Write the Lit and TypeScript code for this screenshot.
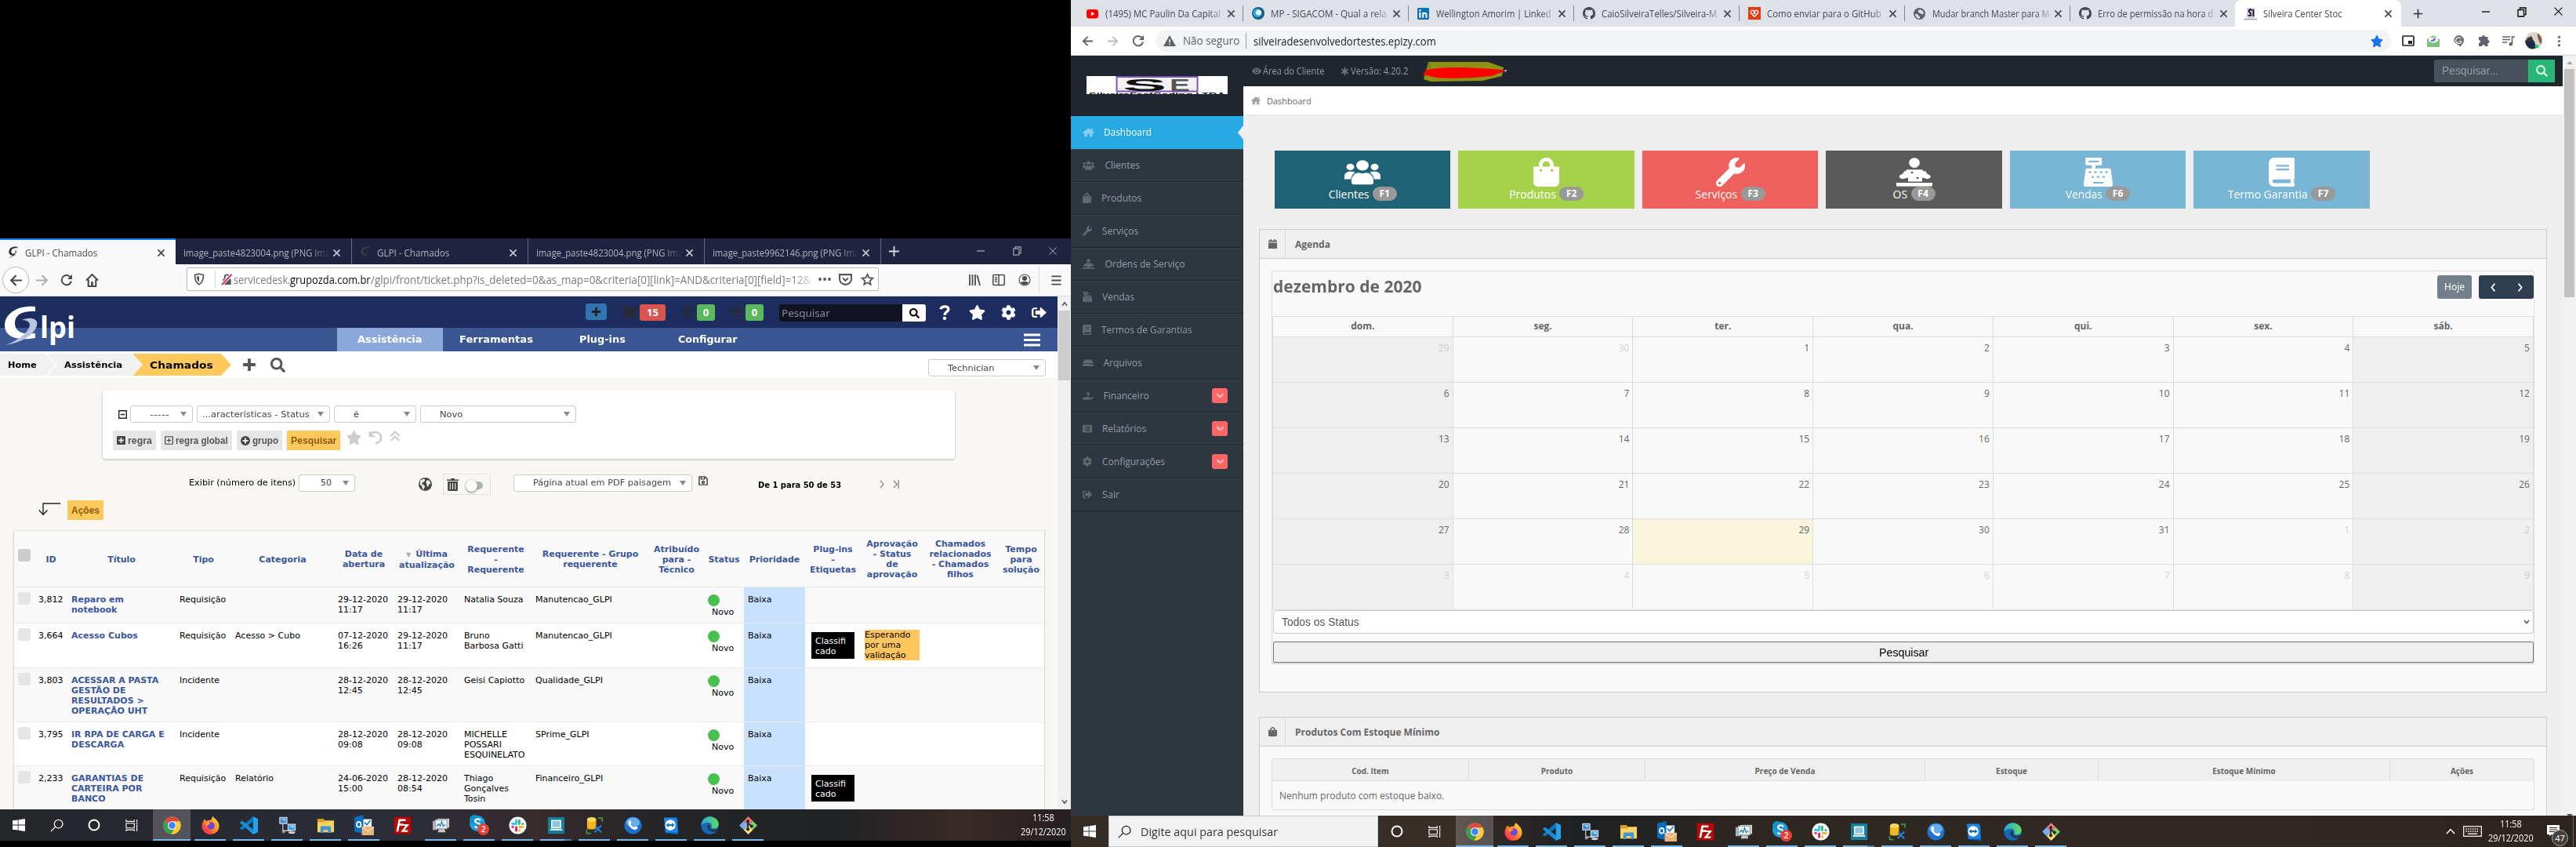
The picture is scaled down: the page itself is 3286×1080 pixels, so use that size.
import { LitElement, html, svg, css, nothing } from "lit";
import { customElement, property, query } from "lit/decorators.js";

/* ---------- icon set ---------- */
type Icon = { vb: string; body: unknown };
const line = (d: string, w = 2) => svg`<path d=${d} fill="none" stroke="currentColor" stroke-width=${w} />`;
const fill = (d: string) => svg`<path d=${d} fill="currentColor" fill-rule="evenodd" />`;

const icons: Record<string, Icon> = {
  star: { vb: "0 0 576 512", body: fill("M259.3 17.8L194 150.2 47.9 171.5c-26.2 3.8-36.7 36.1-17.7 54.6l105.7 103-25 145.5c-4.5 26.3 23.2 46 46.4 33.7L288 439.6l130.7 68.7c23.2 12.2 50.9-7.4 46.4-33.7l-25-145.5 105.7-103c19-18.5 8.5-50.8-17.7-54.6L382 150.2 316.7 17.8c-11.7-23.6-45.6-23.9-57.4 0z") },
  search: { vb: "0 0 512 512", body: fill("M505 442.7L405.3 343c-4.5-4.5-10.6-7-17-7H372c27.6-35.3 44-79.7 44-128C416 93.1 322.9 0 208 0S0 93.1 0 208s93.1 208 208 208c48.3 0 92.7-16.4 128-44v16.3c0 6.4 2.5 12.5 7 17l99.7 99.7c9.4 9.4 24.6 9.4 33.9 0l28.3-28.3c9.4-9.4 9.4-24.6.1-34zM208 336c-70.7 0-128-57.2-128-128 0-70.7 57.2-128 128-128 70.7 0 128 57.2 128 128 0 70.7-57.2 128-128 128z") },
  wrench: { vb: "0 0 512 512", body: fill("M507.73 109.1c-2.24-9.03-13.54-12.09-20.12-5.51l-74.36 74.36-67.88-11.31-11.31-67.88 74.36-74.36c6.62-6.62 3.43-17.9-5.66-20.16-47.38-11.74-99.55.91-136.58 37.93-39.64 39.64-50.55 97.1-34.05 147.2L18.74 402.76c-24.99 24.99-24.99 65.51 0 90.5 24.99 24.99 65.51 24.99 90.5 0l213.21-213.21c50.12 16.71 107.47 5.68 147.37-34.22 37.07-37.07 49.7-89.32 37.91-136.73zM64 472c-13.25 0-24-10.75-24-24 0-13.26 10.75-24 24-24s24 10.74 24 24c0 13.25-10.75 24-24 24z") },
  bag: { vb: "0 0 448 512", body: fill("M352 160v-32C352 57.42 294.579 0 224 0 153.42 0 96 57.42 96 128v32H0v272c0 44.183 35.817 80 80 80h288c44.183 0 80-35.817 80-80V160h-96zm-192-32c0-35.29 28.71-64 64-64s64 28.71 64 64v32H160v-32zm160 120c-13.255 0-24-10.745-24-24s10.745-24 24-24 24 10.745 24 24-10.745 24-24 24zm-192 0c-13.255 0-24-10.745-24-24s10.745-24 24-24 24 10.745 24 24-10.745 24-24 24z") },
  book: { vb: "0 0 448 512", body: fill("M448 360V24c0-13.3-10.7-24-24-24H96C43 0 0 43 0 96v320c0 53 43 96 96 96h328c13.3 0 24-10.7 24-24v-16c0-7.5-3.5-14.3-8.9-18.7-4.2-15.4-4.2-59.3 0-74.7 5.4-4.3 8.9-11.1 8.9-18.6zM128 134c0-3.3 2.7-6 6-6h212c3.3 0 6 2.7 6 6v20c0 3.3-2.7 6-6 6H134c-3.3 0-6-2.7-6-6v-20zm0 64c0-3.3 2.7-6 6-6h212c3.3 0 6 2.7 6 6v20c0 3.3-2.7 6-6 6H134c-3.3 0-6-2.7-6-6v-20zm253.4 250H96c-17.7 0-32-14.3-32-32 0-17.6 14.4-32 32-32h285.4c-1.9 17.1-1.9 46.9 0 64z") },
  cog: { vb: "0 0 512 512", body: fill("M487.4 315.7l-42.6-24.6c4.3-23.2 4.3-47 0-70.2l42.6-24.6c4.9-2.8 7.1-8.6 5.5-14-11.1-35.6-30-67.8-54.7-94.6-3.8-4.1-10-5.1-14.8-2.3L380.8 110c-17.9-15.4-38.5-27.3-60.8-35.1V25.8c0-5.6-3.9-10.5-9.4-11.7-36.7-8.2-74.3-7.8-109.2 0-5.5 1.2-9.4 6.1-9.4 11.7V75c-22.2 7.9-42.8 19.8-60.8 35.1L88.7 85.5c-4.9-2.8-11-1.9-14.8 2.3-24.7 26.7-43.6 58.9-54.7 94.6-1.7 5.4.6 11.2 5.5 14L67.3 221c-4.3 23.2-4.3 47 0 70.2l-42.6 24.6c-4.9 2.8-7.1 8.6-5.5 14 11.1 35.6 30 67.8 54.7 94.6 3.8 4.1 10 5.1 14.8 2.3l42.6-24.6c17.9 15.4 38.5 27.3 60.8 35.1v49.2c0 5.6 3.9 10.5 9.4 11.7 36.7 8.2 74.3 7.8 109.2 0 5.5-1.2 9.4-6.1 9.4-11.7v-49.2c22.2-7.9 42.8-19.8 60.8-35.1l42.6 24.6c4.9 2.8 11 1.9 14.8-2.3 24.7-26.7 43.6-58.9 54.7-94.6 1.5-5.5-.7-11.3-5.6-14.1zM256 336c-44.1 0-80-35.9-80-80s35.9-80 80-80 80 35.9 80 80-35.9 80-80 80z") },
  exit: { vb: "0 0 512 512", body: fill("M497 273L329 441c-15 15-41 4.5-41-17v-96H152c-13.3 0-24-10.7-24-24v-96c0-13.3 10.7-24 24-24h136V88c0-21.4 25.9-32 41-17l168 168c9.3 9.4 9.3 24.6 0 34zM192 436v-40c0-6.6-5.4-12-12-12H96c-17.7 0-32-14.3-32-32V160c0-17.7 14.3-32 32-32h84c6.6 0 12-5.4 12-12V76c0-6.6-5.4-12-12-12H96c-53 0-96 43-96 96v192c0 53 43 96 96 96h84c6.6 0 12-5.4 12-12z") },
  github: { vb: "0 0 16 16", body: fill("M8 0C3.58 0 0 3.58 0 8c0 3.54 2.29 6.53 5.47 7.59.4.07.55-.17.55-.38 0-.19-.01-.82-.01-1.49-2.01.37-2.53-.49-2.69-.94-.09-.23-.48-.94-.82-1.13-.28-.15-.68-.52-.01-.53.63-.01 1.08.58 1.23.82.72 1.21 1.87.87 2.33.66.07-.52.28-.87.51-1.07-1.78-.2-3.64-.89-3.64-3.95 0-.87.31-1.59.82-2.15-.08-.2-.36-1.02.08-2.12 0 0 .67-.21 2.2.82.64-.18 1.32-.27 2-.27.68 0 1.36.09 2 .27 1.53-1.04 2.2-.82 2.2-.82.44 1.1.16 1.92.08 2.12.51.56.82 1.27.82 2.15 0 3.07-1.87 3.75-3.65 3.95.29.25.54.73.54 1.48 0 1.07-.01 1.93-.01 2.2 0 .21.15.46.55.38A8.013 8.013 0 0016 8c0-4.42-3.58-8-8-8z") },
  users: { vb: "0 0 46 40", body: svg`<g fill="currentColor"><circle cx="7.500" cy="12" r="5"/><circle cx="38.500" cy="12" r="5"/><circle cx="23" cy="9.500" r="8"/><path d="M0 31v-5c0-4 3-7 7-7h2c2 0 3.500.5 4.500 1.500C10.500 23 9 26 8.500 29v2z"/><path d="M46 31v-5c0-4-3-7-7-7h-2c-2 0-3.500.5-4.500 1.500 3 2.500 4.500 5.500 5 8.500v2z"/><path d="M9 36v-3c0-6.500 4-12 9.500-12 1.500 0 2.500 1 4.500 1s3-1 4.500-1C33 21 37 26.500 37 33v3c0 2-1 3-3 3H12c-2 0-3-1-3-3z"/></g>` },
  register: { vb: "0 0 512 512", body: fill("M32 10v108a16 16 0 0016 16h96v56H64a32 32 0 00-31.500 26.500L1 440v40a32 32 0 0032 32h446a32 32 0 0032-32v-40l-31.500-223.500A32 32 0 00448 190H208v-56h96a16 16 0 0016-16V10a10 10 0 00-10-10H42a10 10 0 00-10 10zm54 42h180v30H86zM90 240h40v34H90zm98 0h40v34h-40zm98 0h40v34h-40zm98 0h40v34h-40zM140 324h40v34h-40zm96 0h40v34h-40zm96 0h40v34h-40zM166 430h180v26H166z") },
  worker: { vb: "0 0 46 45", body: svg`<g fill="currentColor"><ellipse cx="23" cy="8" rx="6.800" ry="7.800"/><path d="M13 18.500h20l2 3 2-1 2 4 4 3c1.500 3 0 5-3 5.500l-7-2v6H15v-6l-7 2c-4-.5-5-3-3.500-5.500l4-3 2-4 1.500 1z"/><rect x="0" y="39" width="46" height="5.500"/></g><circle cx="20" cy="23" r="1.500" fill="#5a5a5a"/><circle cx="27" cy="31.500" r="1.500" fill="#5a5a5a"/>` },
  home: { vb: "0 0 16 16", body: fill("M8 1.500L0 8.400l1 1.200L2.300 8.500V15h4.200v-4.500h3V15h4.200V8.500L15 9.600l1-1.200-2.300-2V2.500h-2v2.200z") },
  drive: { vb: "0 0 16 16", body: fill("M3.500 3h9L16 8.500H0zM0 9.500h16V12a1.500 1.500 0 01-1.500 1.500h-13A1.500 1.500 0 010 12zm11 1.200v1.300h1.300v-1.300zm2.500 0v1.300h1.300v-1.300z") },
  hand: { vb: "0 0 16 16", body: svg`<path fill="currentColor" d="M0 10.500h3l2-1.300h4.500c1 0 1 1.600 0 1.600H8v.5h3l3.500-2c1-.5 2 .5 1 1.500L12 14H0z"/><path d="M9.800 2H7.600a1.100 1.100 0 000 2.200h1a1.100 1.100 0 010 2.300H6.400M8.200.8v7" stroke="currentColor" fill="none" stroke-width="1.300"/>` },
  report: { vb: "0 0 16 16", body: fill("M1.500 2h13A1.500 1.500 0 0116 3.500v9a1.500 1.500 0 01-1.500 1.500h-13A1.500 1.500 0 010 12.500v-9A1.500 1.500 0 011.500 2zM3 4.500V6h1.500V4.500zm3 0V6h7V4.500zM3 7.300v1.500h1.500V7.300zm3 0v1.500h7V7.300zm-3 2.900v1.500h1.500v-1.500zm3 0v1.500h7v-1.500z") },
  eye: { vb: "0 0 16 12", body: svg`<path fill="currentColor" fill-rule="evenodd" d="M8 .5C12 .5 15 4 16 6c-1 2-4 5.500-8 5.500S1 8 0 6C1 4 4 .5 8 .5zm0 2A3.500 3.500 0 108 9.500 3.500 3.500 0 008 2.500z"/><circle cx="8" cy="6" r="2.200" fill="currentColor"/>` },
  asterisk: { vb: "0 0 16 16", body: line("M8 1v14M2 4.500l12 7M14 4.500l-12 7", 2.600) },
  calendar: { vb: "0 0 14 16", body: fill("M3 0h2v2h4V0h2v2h2a1 1 0 011 1v1.700H0V3a1 1 0 011-1h2zM0 6h14v9a1 1 0 01-1 1H1a1 1 0 01-1-1z") },
  plus: { vb: "0 0 16 16", body: line("M8 1v14M1 8h14", 3.400) },
  plusThin: { vb: "0 0 16 16", body: line("M8 1v14M1 8h14", 2) },
  close: { vb: "0 0 16 16", body: line("M3 3l10 10M13 3L3 13", 2) },
  closeThin: { vb: "0 0 16 16", body: line("M2 2l12 12M14 2L2 14", 1.400) },
  min: { vb: "0 0 16 16", body: line("M3 8h10", 1.300) },
  restore: { vb: "0 0 16 16", body: line("M3 5.500h7.500V14H3zM5.500 5V3H13v8.500h-2", 1.300) },
  back: { vb: "0 0 16 16", body: line("M15 8H2M8 2L2 8l6 6", 2) },
  fwd: { vb: "0 0 16 16", body: line("M1 8h13M8 2l6 6-6 6", 2) },
  reload: { vb: "0 0 16 16", body: svg`<path d="M13.200 4.800A6.200 6.200 0 1014 9.500" fill="none" stroke="currentColor" stroke-width="2"/><path d="M15 1v6H9z" fill="currentColor"/>` },
  ffhome: { vb: "0 0 16 16", body: svg`<path d="M1 8l7-7 7 7M3.500 7v8h9V7" fill="none" stroke="currentColor" stroke-width="2"/><path d="M6.700 9.500h2.600V15H6.700z" fill="currentColor"/>` },
  shield: { vb: "0 0 16 16", body: svg`<path d="M8 1.200l5.500 1.500c0 6-1 9.500-5.500 12C3.500 12.200 2.500 8.700 2.500 2.700z" fill="none" stroke="currentColor" stroke-width="1.700"/><path d="M8 4l-3 .8c.2 3.500.8 5.500 3 7z" fill="currentColor"/>` },
  lock: { vb: "0 0 16 16", body: svg`<rect x="2.500" y="7" width="11" height="8" rx="1" fill="currentColor"/><path d="M5 7V4.500a3 3 0 016 0V7" fill="none" stroke="currentColor" stroke-width="2"/><path d="M1.500 14.500L14 1.500" stroke="#fff" stroke-width="4"/><path d="M1 15L14.500 1" stroke="#f0164a" stroke-width="1.900"/>` },
  dots: { vb: "0 0 16 16", body: svg`<g fill="currentColor"><circle cx="2" cy="8" r="1.900"/><circle cx="8" cy="8" r="1.900"/><circle cx="14" cy="8" r="1.900"/></g>` },
  vdots: { vb: "0 0 16 16", body: svg`<g fill="currentColor"><circle cx="8" cy="2.500" r="1.700"/><circle cx="8" cy="8" r="1.700"/><circle cx="8" cy="13.500" r="1.700"/></g>` },
  pocket: { vb: "0 0 16 16", body: line("M1 2h14v5.500a7 6.500 0 01-14 0zM4.700 6L8 9.200 11.300 6", 1.900) },
  starLine: { vb: "0 0 16 16", body: line("M8 1.800l1.900 4.100 4.400.5-3.300 3 .9 4.500L8 11.600l-3.900 2.300.9-4.500-3.300-3 4.400-.5z", 1.700) },
  library: { vb: "0 0 16 16", body: line("M2 1v14M5.500 1v14M9 1v14M11.500 2l3.500 13", 1.800) },
  sidebar: { vb: "0 0 16 16", body: line("M1.800 1.500h12.400a1 1 0 011 1v11a1 1 0 01-1 1H1.800a1 1 0 01-1-1v-11a1 1 0 011-1zM8 2v12M3 5h3M3 7.500h3M3 10h3", 1.500) },
  account: { vb: "0 0 16 16", body: svg`<circle cx="8" cy="8" r="7" fill="none" stroke="currentColor" stroke-width="1.200"/><circle cx="8" cy="6" r="3" fill="currentColor"/><path d="M3 11c2-1.500 8-1.500 10 0-1 2-3 3.200-5 3.200S4 13 3 11z" fill="currentColor"/>` },
  menu: { vb: "0 0 16 16", body: line("M1.500 2.500h13M1.500 8h13M1.500 13.500h13", 2) },
  menuFat: { vb: "0 0 22 18", body: line("M0 2h22M0 9h22M0 16h22", 3.200) },
  question: { vb: "0 0 14 20", body: svg`<path d="M2 5.500C3 1 12 .5 11.800 5.500c0 4-4.800 3.500-4.800 8" fill="none" stroke="currentColor" stroke-width="3.600"/><circle cx="7" cy="17.700" r="2.300" fill="currentColor"/>` },
  ticket: { vb: "0 0 18 13", body: fill("M0 0h18v4a2.500 2.500 0 000 5v4H0V9a2.500 2.500 0 000-5zm3 2v9h12V2zm1.500 1.500h9v6h-9z") },
  clock: { vb: "0 0 16 16", body: line("M8 1.200a6.800 6.800 0 110 13.600A6.800 6.800 0 018 1.200zM8 3.500V8.500l2.500 2.500", 1.700) },
  tasks: { vb: "0 0 16 14", body: line("M6 2.500h10M6 7.200h10M6 12h10M.5 2l1.500 1.500L4.500.5M.5 7l1.500 1.500 2.500-3M1 12h2.500", 1.900) },
  minusSq: { vb: "0 0 12 12", body: line("M.8.8h10.400v10.400H.8zM3 6h6", 1.500) },
  plusSq: { vb: "0 0 12 12", body: fill("M1.500 0h9A1.500 1.500 0 0112 1.500v9a1.500 1.500 0 01-1.500 1.500h-9A1.500 1.500 0 010 10.500v-9A1.500 1.500 0 011.500 0zM5 2.500V5H2.500v2H5v2.500h2V7h2.500V5H7V2.500z") },
  plusSqO: { vb: "0 0 12 12", body: line("M.8.8h10.400v10.400H.8zM3 6h6M6 3v6", 1.300) },
  plusCirc: { vb: "0 0 12 12", body: fill("M6 0a6 6 0 110 12A6 6 0 016 0zM5 2.500V5H2.500v2H5v2.500h2V7h2.500V5H7V2.500z") },
  undo: { vb: "0 0 18 18", body: line("M2 1v6h6M2.500 6.500A7 7 0 119 16", 2.700) },
  dblUp: { vb: "0 0 14 14", body: line("M1.500 7L7 1.700 12.500 7M1.500 13L7 7.700 12.500 13", 2.200) },
  globe: { vb: "0 0 16 16", body: svg`<circle cx="8" cy="8" r="8" fill="currentColor"/><path d="M2 3.500l4-2 2 1L6.500 5 4.500 6 4 8l2.500.8 1 2L6 14l-1.500-.5L4 10.500 1.500 8zM10 3l3 .5 1.500 3.500-2 1-1 3-2-1.500.5-2L8.500 6z" fill="#fff" opacity=".9"/>` },
  trash: { vb: "0 0 14 16", body: fill("M0 1.500h4.500L5 0h4l.5 1.500H14V3H0zM1 4h12v10.500A1.500 1.500 0 0111.500 16h-9A1.500 1.500 0 011 14.500zm2.500 2v8h1V6zm3 0v8h1V6zm3 0v8h1V6z") },
  save: { vb: "0 0 14 14", body: line("M1 1h9l3 3v9H1zM4 1v3.500h5V1M7 7.500a1.700 1.700 0 110 3.400 1.700 1.700 0 010-3.400z", 1.700) },
  right: { vb: "0 0 8 12", body: line("M1.500 1l5 5-5 5", 1.400) },
  last: { vb: "0 0 9 12", body: line("M1 1l5 5-5 5M8 0v12", 1.300) },
  chevL: { vb: "0 0 10 16", body: line("M8 2L3 8l5 6", 2.200) },
  chevR: { vb: "0 0 10 16", body: line("M2 2l5 6-5 6", 2.200) },
  chevD: { vb: "0 0 12 8", body: line("M1.500 1.500L6 6l4.500-4.500", 2.200) },
  chevU: { vb: "0 0 12 8", body: line("M1 7l5-5.500L11 7", 1.500) },
  massArrow: { vb: "0 0 28 17", body: line("M28 1H6v14M.8 9.500L6 15.200l5.500-5.700", 1.400) },
  warn: { vb: "0 0 16 14", body: fill("M8 0l8 14H0zM7.200 5v4.500h1.600V5zm0 5.700v1.600h1.600v-1.600z") },
  pip: { vb: "0 0 16 16", body: svg`<rect x="1" y="2" width="14" height="12" rx="1" fill="none" stroke="currentColor" stroke-width="1.700"/><path d="M8 8h5v4H8z" fill="currentColor"/>` },
  mail: { vb: "0 0 16 16", body: svg`<path d="M0 6l8-5 8 5v9a1 1 0 01-1 1H1a1 1 0 01-1-1z" fill="#78c47e"/><path d="M2 4h12v4.500L8 11 2 8.500z" fill="#fff"/><path d="M5 7l1.500 1.500L9 5M8 8.500L11 5" stroke="#5b5bd0" stroke-width="1.200" fill="none"/>` },
  pinc: { vb: "0 0 16 16", body: svg`<path d="M8 0a7 7 0 017 7c0 4-3.500 5.500-5 9-2-3.500-8-4.500-8.500-9A6.700 6.700 0 018 0z" fill="#6a6d70"/><path d="M11 4.500A4 4 0 108 11c2 0 3.500-1 3.500-3H8" stroke="#fff" stroke-width="1.300" fill="none"/>` },
  puzzle: { vb: "0 0 16 16", body: fill("M6 3a2 2 0 014 0h3.500v4a2 2 0 010 4.200V15H10a2 2 0 00-4 0H2v-4a2 2 0 000-4V3z") },
  queue: { vb: "0 0 16 16", body: svg`<path d="M0 3h10M0 6.500h10M0 10h6M12.500 12V3H16" stroke="currentColor" stroke-width="1.600" fill="none"/><circle cx="10.800" cy="12.200" r="2.200" fill="currentColor"/>` },
  yt: { vb: "0 0 16 16", body: svg`<rect y="2" width="16" height="12.500" rx="3.500" fill="#f00"/><path d="M6.300 5.300v5.600L11 8.100z" fill="#fff"/>` },
  sigacom: { vb: "0 0 16 16", body: svg`<circle cx="8" cy="8" r="8" fill="#17597f"/><circle cx="7" cy="7.500" r="5.800" fill="#2aa9d2"/><circle cx="8.500" cy="7" r="3.500" fill="#e8f6fb"/>` },
  linkedin: { vb: "0 0 16 16", body: svg`<rect width="16" height="16" rx="1.500" fill="#0a73b3"/><rect x="2.500" y="6" width="2.300" height="7.500" fill="#fff"/><circle cx="3.650" cy="3.500" r="1.400" fill="#fff"/><path d="M7.700 13.500V6M7.700 9.500c0-3 4.600-3.200 4.600 0v4" stroke="#fff" stroke-width="2.100" fill="none"/>` },
  heart: { vb: "0 0 16 16", body: svg`<rect width="16" height="16" fill="#e53a0e"/><path d="M8 12.300L3.500 7.500C2.500 5 5.500 2.700 8 5.500c2.500-2.800 5.500-.5 4.500 2z" fill="none" stroke="#fff" stroke-width="1.400"/><path d="M8 9.500L6 7.300 8 6l2 1.300z" fill="#fff"/>` },
  webglobe: { vb: "0 0 16 16", body: svg`<circle cx="8" cy="8" r="8" fill="#5f6368"/><path d="M2 8.500c3-.5 4 .5 4.500 2S9 11 8.500 13.500 6 14 5 13.500 2 10.500 2 8.500zM8 2.500c2-.5 5.500 2 5.800 5-1 1.500-2.800 1.500-3.800.5S8.500 7 7 6.500 6.500 3 8 2.500z" fill="#dee1e6"/>` },
  glpi: { vb: "0 0 16 20", body: svg`<path d="M14 1C7-.5 1.500 3 1.500 9c0 4.500 4 6.500 8.500 5.500v-3C7 13 5 11.500 5 8.500 5 5 8 2.500 14 3z" fill="currentColor"/><path d="M9 7c4-1.500 5 .5 3.500 3.500C10.500 14.500 6 17.500 1 19c4-2.500 8.500-6 9.500-9.500C11 8 10.500 7.500 9 7z" fill="currentColor" opacity=".55"/>` },
  windows: { vb: "0 0 16 16", body: fill("M0 2.300L6.700 1.400v6.200H0zM7.500 1.300L16 0v7.600H7.500zM0 8.400h6.700v6.200L0 13.700zM7.500 8.400H16V16l-8.500-1.300z") },
  lens: { vb: "0 0 16 16", body: line("M10 1.200a5 5 0 110 10 5 5 0 010-10zM6.200 9.800L.8 15.200", 1.200) },
  cortana: { vb: "0 0 16 16", body: line("M8 1.500a6.500 6.500 0 110 13 6.500 6.500 0 010-13z", 2) },
  taskview: { vb: "0 0 18 16", body: line("M1 0v2.500h11V0M1 5h11v6.500H1zM1 16v-2h11v2M15.500 0v4M15.500 7v9M14.500 5.500h2", 1.200) },
  keyboard: { vb: "0 0 24 14", body: svg`<rect x=".7" y=".7" width="22.600" height="12.600" fill="none" stroke="currentColor" stroke-width="1.200"/><path d="M3.500 4h17M3.500 7h17" stroke="currentColor" stroke-width="1.500" stroke-dasharray="1.500 1.300"/><path d="M6 10.200h12" stroke="currentColor" stroke-width="1.300"/>` },
  note: { vb: "0 0 16 14", body: svg`<path d="M0 0h16v12H6l-3 2v-2H0z" fill="currentColor"/><path d="M3 3.500h10M3 6h10M3 8.500h7" stroke="#2c2520" stroke-width="1"/>` },
  /* taskbar applications */
  chrome: { vb: "0 0 24 24", body: svg`<circle cx="12" cy="12" r="11.500" fill="#fcc934"/><path d="M12 12L2 6.300A11.500 11.500 0 0122 6.300z" fill="#d94b3d"/><path d="M12 12L2 6.300A11.500 11.500 0 0011 23.500l5.500-9z" fill="#34a050"/><path d="M12 6.500h10.100a11.500 11.500 0 01-11 17L16.500 14z" fill="#fcc934"/><circle cx="12" cy="12" r="5.800" fill="#f4f4f4"/><circle cx="12" cy="12" r="4.600" fill="#4285f4"/>` },
  firefox: { vb: "0 0 24 24", body: svg`<defs><linearGradient id="f" x1="1" y1="0" x2="0" y2="1"><stop offset="0" stop-color="#ffe93a"/><stop offset=".45" stop-color="#ff9128"/><stop offset=".8" stop-color="#ff3a4e"/><stop offset="1" stop-color="#e31587"/></linearGradient></defs><path d="M3 5.500l1-2 2.500 2.500c2-1 4.500-1 6-1L15 0c2 2 4 3 5 5 2.500 2.500 3.500 5 3.500 8A11.500 11 0 0112 24 11.500 11 0 01.5 13C.5 10 1.500 7.500 3 5.500z" fill="url(#f)"/><circle cx="12.500" cy="12.500" r="5" fill="#7343d8"/><path d="M5 8c3-1 5.500 0 7 2-2 0-3 1-3.500 2.500C6.500 12.500 5 10.500 5 8z" fill="#ff9a2b"/>` },
  vscode: { vb: "0 0 24 24", body: svg`<path d="M17.500 0L24 3v18l-6.500 3z" fill="#24a4ee"/><path d="M17.500 0L1 14.500 0 16l2 2 2-.5L18 6.500z" fill="#0c76bf"/><path d="M17.500 24L1 9.500 0 8l2-2 2 .5L18 17.500z" fill="#1c8bd8"/>` },
  network: { vb: "0 0 24 24", body: svg`<path d="M6 9v10h11" stroke="#b9bec4" fill="none" stroke-width="1.400"/><g stroke="#d8dde2" stroke-width="1.300"><rect x="2" y="1.500" width="9.500" height="8" fill="#3f88cf"/><rect x="13" y="10.500" width="9.500" height="8" fill="#3d9fe8"/></g><path d="M3.500 3h6v4z" fill="#9cd0fa"/><path d="M14.500 12h6v4z" fill="#a8defd"/><ellipse cx="18" cy="21.500" rx="4.500" ry="1.600" fill="#cfd2d4"/><ellipse cx="7" cy="20" rx="2" ry="2.500" fill="#9ba1a6"/>` },
  folder: { vb: "0 0 24 24", body: svg`<path d="M1 3.500h8l2 2h12V21H1z" fill="#f9d262"/><path d="M1 3.500h8l2 2v2H1z" fill="#d99a1d"/><path d="M5 14.500a1.500 1.500 0 011.500-1.500h11a1.500 1.500 0 011.500 1.500V22h-4v-4H9v4H5z" fill="#3f98d3"/>` },
  outlook: { vb: "0 0 27 26", body: svg`<path d="M12 5.500h12V19H12z" fill="#f5f8fb"/><path d="M14.500 9.500l3 3 5-5.500" stroke="#1673c5" stroke-width="1.600" fill="none"/><path d="M1 3l12-3v24L1 21.500z" fill="#0b6cbe"/><ellipse cx="7" cy="12.200" rx="2.800" ry="3.400" fill="none" stroke="#fff" stroke-width="1.800"/><path d="M11 15h16v11H11z" fill="#ebb374"/><path d="M11 15l8 6 8-6" stroke="#fff" fill="none"/>` },
  filezilla: { vb: "0 0 24 24", body: svg`<rect x=".7" y=".7" width="22.600" height="22.600" fill="#b30c0c" stroke="#8d0505" stroke-width="1.400" stroke-dasharray="1.500 1"/><path d="M5 20L8 5h8M7 11h6" stroke="#fff" stroke-width="2.700" fill="none"/><path d="M11 11.500h7.500L12 19.500h7" stroke="#fff" stroke-width="2.300" fill="none"/>` },
  monitor: { vb: "0 0 24 24", body: svg`<rect x="7" y="3" width="16" height="12" fill="#cfd2d2"/><rect x="1" y="6" width="6" height="12" fill="#aeb4b4"/><rect x="4.500" y="4.500" width="15.500" height="12" fill="#e9f1f3" stroke="#9aa0a0"/><path d="M6 13l3-3 2 3 2-6 2 6 3-2" stroke="#2b83b0" fill="none" stroke-width="1.300"/><path d="M9 17h8l1 4H8z" fill="#c4c8c8"/>` },
  skype: { vb: "0 0 26 26", body: svg`<circle cx="11" cy="11" r="10" fill="#1ba2dd"/><circle cx="7" cy="6" r="6" fill="#1491cf"/><circle cx="16" cy="16" r="6" fill="#1491cf"/><path d="M15 7c-2-2.500-7-2-7 1s7 2 7 5.500-6 3.500-7.500 1" stroke="#fff" stroke-width="2.200" fill="none"/><circle cx="18.500" cy="18.500" r="7.500" fill="#ea3f35"/><text x="18.500" y="22.200" font-size="10" font-family="Open Sans" fill="#fff" text-anchor="middle" font-weight="600">2</text>` },
  slack: { vb: "0 0 24 24", body: svg`<circle cx="12" cy="12" r="11.500" fill="#fff"/><g stroke-width="3" stroke-linecap="round"><path d="M10 5v4.500M4.500 9.500h1" stroke="#36c5f0"/><path d="M5.500 10H10" stroke="#36c5f0"/><path d="M14 5.500V10M18.500 10h.5" stroke="#2eb67d"/><path d="M14.500 14H19M14 18.500v.5" stroke="#ecb22e"/><path d="M10 14.500V19M5 14h.5" stroke="#e01e5a"/></g>` },
  laptop: { vb: "0 0 24 24", body: svg`<rect x="1" y="1" width="22" height="22" fill="#167d9c"/><rect x="6" y="5.500" width="12" height="9.500" fill="#8cc9de" stroke="#fff" stroke-width="1.500"/><path d="M4 16.500h16v2H4z" fill="#fff"/>` },
  dbtools: { vb: "0 0 24 24", body: svg`<path d="M2 4v11c0 3 12 3 12 0V4z" fill="#f3b719"/><ellipse cx="8" cy="4" rx="6" ry="3" fill="#ffdc5a"/><path d="M16.500 2H22v5M1.500 17v5.500H7" stroke="#3f8b43" stroke-width="2" fill="none"/><path d="M12 21l9-9M13 12.500l8 9" stroke="#1f7fcc" stroke-width="2.300"/>` },
  phone: { vb: "0 0 24 24", body: svg`<circle cx="12" cy="12" r="11.500" fill="#1d70cb"/><ellipse cx="12" cy="8" rx="9" ry="6.500" fill="#67ade9"/><path d="M6 6.500c1-2 3-1.500 3.500.5S8 10 10 12.500s4 1.500 5.500 1 3 .5 2.500 2-2.500 3-5 2c-5-2-8-7-7-11z" fill="#fff"/>` },
  teamviewer: { vb: "0 0 24 24", body: svg`<path d="M3 2l17 2 1 20-17-2z" fill="#0966c9"/><path d="M2 1.500h17l1.500 20H4z" fill="#1d86ea"/><circle cx="10.500" cy="11.500" r="7" fill="#fff"/><path d="M4.500 11.500l4-3v2h4v-2l4 3-4 3v-2h-4v2z" fill="#1472c9"/>` },
  edge: { vb: "0 0 24 24", body: svg`<defs><linearGradient id="e" x1="0" y1="0" x2="1" y2="0"><stop offset="0" stop-color="#2aa6de"/><stop offset="1" stop-color="#5fdc5a"/></linearGradient></defs><circle cx="12" cy="12" r="11.700" fill="#1567b8"/><path d="M.3 12C1 5 6 .3 12 .3S23.700 5 23.700 10c0 4-3 6-6 6s-4-1-3.500-2.500C15.500 10 12 8 9 8c-4 0-7 2-8.700 4z" fill="url(#e)"/><path d="M9.500 12c-1.500 5 3 8.500 7 8.500 3 0 5-1 6-2.500 1-1.500 0-1.500-1-1-4 1.500-12 1-9-4.500-.5-1.500-2-1.500-3-.5z" fill="#2c2e33"/>` },
  git: { vb: "0 0 24 24", body: svg`<path d="M12 0l6 6-6 6-6-6z" fill="#ef7676"/><path d="M6 6l6 6-6 6-6-6z" fill="#7fa8f0"/><path d="M18 6l6 6-6 6-6-6z" fill="#7fcf6d"/><path d="M12 12l6 6-6 6-6-6z" fill="#ffe07a"/><path d="M11.500 5v13M11.500 9l5 4" stroke="#222" stroke-width="1.700"/><g fill="#222"><circle cx="11.500" cy="6.500" r="2"/><circle cx="11.500" cy="17" r="2.200"/><circle cx="16.500" cy="13" r="2"/></g>` },
};

const ic = (name: string, w: number, h = w) =>
  html`<svg width=${w} height=${h} viewBox=${icons[name].vb} preserveAspectRatio="none">${icons[name].body}</svg>`;
const t = (text: string, w: number) => html`<fit-text .w=${w}>${text}</fit-text>`;

const base = css`
  *, *::before, *::after { box-sizing: border-box; }
  svg { display: block; flex: none; }
  .row { display: flex; align-items: center; }
  .fade { overflow: hidden; -webkit-mask-image: linear-gradient(90deg, #000 86%, transparent); mask-image: linear-gradient(90deg, #000 86%, transparent); }
`;

/** Text condensed or widened so that it takes exactly w pixels. */
@customElement("fit-text")
class FitText extends LitElement {
  @property({ type: Number }) w = 0;
  @query("span") span!: HTMLSpanElement;
  static styles = css`
    :host { display: inline-block; white-space: nowrap; text-align: left; }
    span { display: inline-block; transform-origin: 0 50%; }
  `;
  firstUpdated() {
    this.style.width = `${this.w}px`;
    const n = this.span.offsetWidth;
    if (n) this.span.style.transform = `scaleX(${this.w / n})`;
  }
  render() { return html`<span><slot></slot></span>`; }
}

/* ---------- Windows taskbar ---------- */
const apps = ["chrome", "firefox", "vscode", "network", "folder", "outlook", "filezilla", "monitor", "skype", "slack", "laptop", "dbtools", "phone", "teamviewer", "edge", "git"];

@customElement("task-bar")
class TaskBar extends LitElement {
  @property({ type: Boolean, reflect: true }) main = false;
  static styles = [base, css`
    :host { display: flex; height: 40px; color: #fff; font: 12px "Open Sans", sans-serif; background: linear-gradient(90deg, #25262a, #2b2d38 38%, #382b2d 50%, #262628 60%, #202224 78%, #3a2a27 90%, #241f22); }
    :host([main]) { background: linear-gradient(90deg, #362c26, #382e28 25%, #1e2022 34%, #2d2722 45%, #302823 80%, #2c241f); }
    .b { width: 48px; height: 40px; display: flex; align-items: center; justify-content: center; }
    .find { width: 344px; background: #f2f2f2; border: 1px solid #c9c9c9; color: #333; padding-left: 11px; gap: 12px; font-size: 15px; }
    .find svg { color: #222; }
    .apps { display: flex; gap: 9px; margin-left: 3px; }
    .app { width: 40px; height: 40px; padding-top: 2px; border-bottom: 2px solid #76b9ed; display: flex; align-items: center; justify-content: center; }
    .app.chrome { width: 48px; margin-right: -4px; background: #ffffff33; }
    :host(:not([main])) .app.chrome { margin-left: 0; }
    .app.filezilla { border-color: transparent; }
    .app.laptop { border-image: linear-gradient(90deg, #76b9ed 77%, #4b7ba3 77%) 1; }
    .tray { margin-left: auto; display: flex; align-items: center; }
    .time { width: 58px; display: flex; flex-direction: column; align-items: center; gap: 2px; line-height: 16px; margin-right: 6px; }
    :host([main]) .time { margin: 0 17px 0 8px; }
    .bell { position: relative; width: 34px; height: 40px; border-right: 1px solid #6b6663; margin-right: 3px; padding-top: 12px; }
    .count { position: absolute; left: 6px; top: 18px; width: 21px; height: 21px; border-radius: 50%; border: 1px solid #aaa; background: #45403c; font-size: 11px; line-height: 19px; text-align: center; }
    .kb { margin-left: 10px; }
  `];
  render() {
    return html`
      <div class="b">${ic("windows", 16)}</div>
      ${this.main ? html`<div class="find row">${ic("lens", 17)}${t("Digite aqui para pesquisar", 175)}</div>` : html`<div class="b">${ic("lens", 17)}</div>`}
      <div class="b">${ic("cortana", 16)}</div>
      <div class="b">${ic("taskview", 17, 15)}</div>
      <div class="apps">${apps.map(a => html`<div class="app ${a}">${ic(a, a === "skype" || a === "outlook" ? 26 : 23)}</div>`)}</div>
      <div class="tray">
        ${this.main ? html`${ic("chevU", 12, 8)}<span class="kb">${ic("keyboard", 24, 14)}</span>` : nothing}
        <div class="time">${t("11:58", 28)}${t("29/12/2020", 58)}</div>
        ${this.main ? html`<div class="bell">${ic("note", 16, 14)}<span class="count">47</span></div>` : nothing}
      </div>`;
  }
}

/* ---------- Firefox with the GLPI ticket list ---------- */
type Ticket = { id: string; title: string[]; kind: string; cat?: string; open: string[]; upd: string[]; who: string[]; group: string; tag?: boolean; wait?: boolean; h: string };
const tickets: Ticket[] = [
  { id: "3,812", title: ["Reparo em", "notebook"], kind: "Requisição", open: ["29-12-2020", "11:17"], upd: ["29-12-2020", "11:17"], who: ["Natalia Souza"], group: "Manutencao_GLPI", h: "r46" },
  { id: "3,664", title: ["Acesso Cubos"], kind: "Requisição", cat: "Acesso > Cubo", open: ["07-12-2020", "16:26"], upd: ["29-12-2020", "11:17"], who: ["Bruno", "Barbosa Gatti"], group: "Manutencao_GLPI", tag: true, wait: true, h: "r57" },
  { id: "3,803", title: ["ACESSAR A PASTA", "GESTÃO DE", "RESULTADOS >", "OPERAÇÃO UHT"], kind: "Incidente", open: ["28-12-2020", "12:45"], upd: ["28-12-2020", "12:45"], who: ["Geisi Capiotto"], group: "Qualidade_GLPI", h: "r69" },
  { id: "3,795", title: ["IR RPA DE CARGA E", "DESCARGA"], kind: "Incidente", open: ["28-12-2020", "09:08"], upd: ["28-12-2020", "09:08"], who: ["MICHELLE", "POSSARI", "ESQUINELATO"], group: "SPrime_GLPI", h: "r56" },
  { id: "2,233", title: ["GARANTIAS DE", "CARTEIRA POR", "BANCO"], kind: "Requisição", cat: "Relatório", open: ["24-06-2020", "15:00"], upd: ["28-12-2020", "08:54"], who: ["Thiago", "Gonçalves", "Tosin"], group: "Financeiro_GLPI", tag: true, h: "r56" },
];
const heads = [[""], ["ID"], ["Título"], ["Tipo"], ["Categoria"], ["Data de", "abertura"], ["Última", "atualização"], ["Requerente", "-", "Requerente"], ["Requerente - Grupo", "requerente"], ["Atribuído", "para -", "Técnico"], ["Status"], ["Prioridade"], ["Plug-ins", "-", "Etiquetas"], ["Aprovação", "- Status", "de", "aprovação"], ["Chamados", "relacionados", "- Chamados", "filhos"], ["Tempo", "para", "solução"]];
const lines = (a: string[]) => a.map((s, i) => html`${i ? html`<br>` : nothing}${s}`);

@customElement("glpi-window")
class GlpiWindow extends LitElement {
  static styles = [base, css`
    :host { display: flex; flex-direction: column; height: 728px; overflow: hidden; font: 11px/13px "DejaVu Sans", Verdana, sans-serif; color: #000; background: #f8f7f3; }
    .tabs { display: grid; grid-template-columns: 224px repeat(4, 225.1px) 1fr 138px; height: 33px; flex: none; background: #202340; color: #b4b5c0; font: 12px "Open Sans", sans-serif; }
    .tab { display: grid; grid-template-columns: 1fr 16px; align-items: center; padding: 3px 9px 0 10px; border-right: 1px solid #6a6b7e; }
    .tab.on { background: #f9f9fa; border-top: 2px solid #0a84ff; border-right: 0; color: #4c4c50; padding-top: 1px; }
    .tab .row { gap: 8px; }
    .tab .close { color: #c9cad0; }
    .tab.on .close { color: #444; }
    .dim { color: #3c3a45; }
    .own { color: #333; }
    .add { padding-left: 9px; color: #d6d6dc; }
    .win { display: grid; grid-template-columns: 46px 46px 46px; align-items: center; justify-items: center; color: #9fa0ac; padding-bottom: 2px; }
    .nav { display: grid; grid-template-columns: 45px 32px 32px 129px 883px 114px 31px 33px 26px 1fr; align-items: center; height: 41px; flex: none; background: #f9f9fa; border-bottom: 1px solid #d8d8da; color: #4a4a4f; }
    .nav > .circle { width: 34px; height: 34px; margin-left: 3px; border: 1px solid #b5b5b9; border-radius: 50%; background: #fff; display: grid; place-items: center; }
    .light { color: #b0b0b3; }
    .url { display: grid; grid-template-columns: 29px 23px 1fr 28px 28px 22px; align-items: center; height: 30px; background: #fff; border: 1px solid #b8b8ba; border-radius: 2px; padding: 0 0 0 7px; font: 14px "Open Sans", sans-serif; color: #7a7a7d; margin-top: -2px; }
    .url b { font-weight: 400; color: #0c0c0d; }
    .url svg { color: #55555a; }
    .url .fade { white-space: nowrap; -webkit-mask-image: linear-gradient(90deg, #000 96%, transparent); mask-image: linear-gradient(90deg, #000 96%, transparent); }
    .url .lk { margin: 0 -8px 0 0; padding-left: 7px; }
    .url .dt { justify-self: end; margin-right: 10px; }
    .url .sep { border-right: 1px solid #d8d8da; height: 22px; display: flex; align-items: center; }
    .menu { border-left: 1px solid #dcdcde; height: 34px; display: flex; align-items: center; padding-left: 14px; }
    .body { display: grid; grid-template-columns: 1349px 17px; flex: 1; min-height: 0; }
    .page { position: relative; overflow: hidden; }
    .bar { height: 40px; background: #1d2d60; color: #fff; display: grid; grid-template-columns: 747px 47px 75px 62px 63px 187px 17px 38px 41px 39px 1fr; align-items: center; }
    .logo { position: absolute; left: 6px; top: 12px; color: #fff; overflow: visible; }
    .addbtn { width: 27px; height: 21px; background: #3175b0; border-radius: 3px; color: #222; display: grid; place-items: center; margin-bottom: 1px; }
    .cnt { color: #2a2a2a; gap: 4px; }
    .cnt span { font: bold 13px "Noto Sans", sans-serif; color: #fff; height: 21px; line-height: 20px; border-radius: 3px; background: #5cb85c; width: 23px; text-align: center; }
    .cnt span.red { background: #d9534f; width: 33px; }
    .q { display: flex; height: 22px; width: 187px; margin-top: 2px; }
    .q i { flex: 1; background: #111222; border-radius: 3px 0 0 3px; font: 13px/22px "Noto Sans", sans-serif; color: #8c8c96; padding-left: 3px; }
    .q span { width: 30px; background: #fff; color: #000; display: grid; place-items: center; border-radius: 0 3px 3px 0; }
    .menuBar { height: 30px; background: #3a5693; color: #fff; font: bold 12px/30px "DejaVu Sans", sans-serif; display: grid; grid-template-columns: 430px 135px 21px 152.500px 126.500px 441px 1fr; align-items: center; }
    .menuBar .on { background: #8aa8d9; padding-left: 26px; height: 30px; }
    .crumbs { height: 34px; background: #fff; display: flex; align-items: center; font-weight: bold; color: #000; padding-right: 15px; }
    .chip { height: 28px; display: flex; align-items: center; background: #f1f1f1; clip-path: polygon(0 0, calc(100% - 13px) 0, 100% 50%, calc(100% - 13px) 100%, 0 100%, 13px 50%); }
    .chip.c1 { width: 71px; padding-left: 10px; clip-path: polygon(0 0, calc(100% - 13px) 0, 100% 50%, calc(100% - 13px) 100%, 0 100%); }
    .chip.c2 { width: 121px; margin-left: -11px; padding-left: 22px; }
    .chip.c3 { width: 126px; margin-left: -12px; padding-left: 22px; background: #fec95c; font-size: 13px; }
    .p, .s { color: #555; }
    .p { margin-left: 14px; } .s { margin-left: 18px; }
    .sel { height: 22px; border: 1px solid #ccc; border-radius: 3px; background: #fff; color: #444; font-weight: 400; display: flex; align-items: center; justify-content: space-between; padding-right: 7px; }
    .sel::after { content: ""; border: 4px solid transparent; border-top: 6px solid #888; border-bottom: 0; }
    .tech { width: 150px; margin-left: auto; padding-left: 24px; margin-top: 8px; }
    .filter { margin: 15px 0 0 131px; width: 1087px; height: 88px; background: #fff; border-radius: 4px; box-shadow: 0 1px 3px #0004; padding: 20px 0 0 13px; }
    .criteria { display: grid; grid-template-columns: 10px 80px 170px 105px 199px; column-gap: 5px; padding-left: 7px; align-items: center; }
    .criteria > svg { color: #222; }
    .criteria .sel { padding-left: 24px; }
    .criteria .sel:nth-child(3) { padding-left: 6px; }
    .btns { display: flex; gap: 6px; margin-top: 10px; color: #ccc; }
    .btn { height: 25px; background: #e6e6e6; color: #555; font: bold 12px "Liberation Sans", sans-serif; display: flex; align-items: center; gap: 3px; padding: 0 5px; }
    .btn svg { color: #444; }
    .btn.y { background: #fec95c; color: #8f5a0a; }
    .btns > svg { margin: 0 1px 0 2px; }
    .pager { display: grid; grid-template-columns: 140px 153px 31px 90px 236px 76px 155px 17px 20px; margin-top: 19px; padding-left: 241px; height: 27px; align-items: center; color: #000; }
    .pager .sel { margin-top: -4px; }
    .pager svg { color: #444; }
    .pager .lbl { margin-top: -5px; }
    .pager .n { width: 72px; padding-left: 27px; }
    .pager .pdf { width: 228px; padding-left: 24px; }
    .pager .sv { margin-top: -9px; }
    .bin { width: 61px; height: 27px; border: 1px dotted #ccc; display: flex; align-items: center; padding-left: 4px; gap: 9px; color: #333; }
    .knob { width: 22px; height: 10px; border-radius: 5px; background: linear-gradient(90deg, transparent 8px, #b3b3b3 8px); margin-top: 3px; display: flex; align-items: center; }
    .knob::before { content: ""; width: 15px; height: 15px; border-radius: 50%; background: #fafafa; box-shadow: 0 1px 3px #0008; }
    .pager b { font: bold 10.500px/13px "DejaVu Sans", sans-serif; margin-top: 2px; }
    .pager .g svg { color: #777; }
    .mass { display: flex; gap: 9px; padding: 7px 0 0 49px; height: 45px; align-items: flex-start; }
    .mass > svg { margin-top: 3px; color: #222; }
    .table { width: 1316px; margin-left: 17px; border: 1px solid #ddd; border-top: 1px solid #e8e8e8; box-shadow: 0 1px 2px #0002; }
    .tr { display: grid; grid-template-columns: 26px 42px 138px 71px 131px 76px 85px 91px 150px 70px 51px 78px 71px 80px 94px 61px; background: #fff; border-bottom: 1px solid #e9e9e9; }
    .tr:nth-child(even) { background: #f9f9f9; }
    .tr.h { height: 72px; background: #f9f9f9; color: #39569b; font-weight: bold; text-align: center; align-items: center; padding-top: 1px; }
    .tr.h > div { white-space: nowrap; display: grid; justify-items: center; }
    .r46 { height: 46px; } .r57 { height: 57px; } .r69 { height: 69px; } .r56 { height: 56px; }
    .td { padding: 9px 0 0 5px; white-space: nowrap; }
    .td.ttl { color: #39569b; font-weight: bold; }
    .box { display: block; width: 16px; height: 16px; border-radius: 3px; background: #e5e5e5; margin-top: -3px; }
    .h .box { background: #ccc; margin: -10px 0 0 0; }
    .pri { background: #c8e1ff; }
    .dot { display: block; width: 15px; height: 15px; border-radius: 50%; background: #49bf4d; }
    .st span { display: block; padding: 1px 0 0 5px; }
    .tag { width: 55px; height: 34px; margin: 2px 0 0 3px; padding: 5px; background: #000; color: #fff; }
    .wait { width: 70px; height: 39px; background: #ffc65d; margin-top: -1px; }
    .sort { color: #aaa; font-size: 8px; margin-right: 6px; }
    .scroll { background: #f0f0f0; display: flex; flex-direction: column; align-items: center; color: #555; padding: 6px 0; }
    .scroll i { width: 15px; height: 89px; background: #cdcdcd; margin: 5px 0 auto; }
    .flip { transform: rotate(180deg); }
  `];
  render() {
    const tab = (title: string, w: number, logo = "", on = false) => html`<div class="tab ${on ? "on" : ""}"><div class="row">${logo ? html`<span class=${logo}>${ic("glpi", 14, 16)}</span>` : nothing}<span class=${w > 130 ? "fade" : ""}>${t(title, w)}</span></div><span class="close">${ic("close", 13)}</span></div>`;
    return html`
      <div class="tabs">
        ${tab("GLPI - Chamados", 92, "own", true)}${tab("image_paste4823004.png (PNG Ima", 187)}${tab("GLPI - Chamados", 92, "dim")}${tab("image_paste4823004.png (PNG Ima", 187)}${tab("image_paste9962146.png (PNG Ima", 187)}
        <div class="add row">${ic("plusThin", 15)}</div>
        <div class="win">${ic("min", 16)}${ic("restore", 15)}${ic("closeThin", 12)}</div>
      </div>
      <div class="nav">
        <span class="circle">${ic("back", 17)}</span><span class="light">${ic("fwd", 17)}</span>${ic("reload", 16)}${ic("ffhome", 17)}
        <div class="url">
          <span class="sep">${ic("shield", 16)}</span><span class="row lk">${ic("lock", 15)}</span>
          <span class="fade">${t("servicedesk.", 72)}<b>${t("grupozda.com.br", 103)}</b>${t("/glpi/front/ticket.php?is_deleted=0&as_map=0&criteria[0][link]=AND&criteria[0][field]=12&", 561)}</span>
          <span class="dt">${ic("dots", 16)}</span>${ic("pocket", 17)}${ic("starLine", 17)}
        </div>
        <span></span>${ic("library", 16)}${ic("sidebar", 16)}
        ${ic("account", 16)}<span class="menu">${ic("menu", 15)}</span>
      </div>
      <div class="body">
        <div class="page">
          <div class="bar">
            <span></span><span class="addbtn">${ic("plus", 13)}</span>
            <span class="cnt row">${ic("ticket", 18, 13)}<span class="red">15</span></span>
            <span class="cnt row">${ic("clock", 16)}<span>0</span></span>
            <span class="cnt row">${ic("tasks", 16, 14)}<span>0</span></span>
            <span class="q"><i>${t("Pesquisar", 62)}</i><span>${ic("search", 13, 13)}</span></span>
            <span></span>${ic("question", 14, 19)}${ic("star", 21, 19)}${ic("cog", 19)}${ic("exit", 19, 17)}
          </div>
          <div class="menuBar"><span></span><span class="on">${t("Assistência", 83)}</span><span></span>${t("Ferramentas", 94)}${t("Plug-ins", 59)}${t("Configurar", 76)}${ic("menuFat", 21, 17)}</div>
          <svg class="logo" width="92" height="56" viewBox="0 0 92 56">
            <path d="M39 1C16-1 0 10 0 25c0 14 14 20 39 16v-6C23 37 13 33 13 22 13 11 22 6 39 7z" fill="#fff"/>
            <path d="M22 18c13-5 21-1 19 7-3 12-20 22-40 25 14-5 29-15 31-25 0-4-3-7-10-7z" fill="#b9c4df"/>
            <text x="45" y="41" font-family="Open Sans" font-weight="700" font-size="38" textLength="45" lengthAdjust="spacingAndGlyphs" fill="#fff">lpi</text>
          </svg>
          <div class="crumbs">
            <div class="chip c1">${t("Home", 37)}</div><div class="chip c2">${t("Assistência", 74)}</div><div class="chip c3">${t("Chamados", 81)}</div>
            <span class="p">${ic("plus", 18)}</span><span class="s">${ic("search", 19)}</span>
            <div class="sel tech">${t("Technician", 59)}</div>
          </div>
          <div class="filter">
            <div class="criteria">${ic("minusSq", 11)}<div class="sel">${t("-----", 25)}</div><div class="sel">${t("...aracterísticas - Status", 137)}</div><div class="sel">${t("é", 7)}</div><div class="sel">${t("Novo", 29)}</div></div>
            <div class="btns">
              <span class="btn">${ic("plusSq", 11)}${t("regra", 31)}</span><span class="btn">${ic("plusSqO", 11)}${t("regra global", 67)}</span><span class="btn">${ic("plusCirc", 12)}${t("grupo", 33)}</span><span class="btn y">${t("Pesquisar", 58)}</span>
              ${ic("star", 19, 18)}${ic("undo", 18)}${ic("dblUp", 14)}
            </div>
          </div>
          <div class="pager">
            <span class="lbl">${t("Exibir (número de itens)", 136)}</span><div class="sel n">${t("50", 14)}</div>
            <span>${ic("globe", 17)}</span><span class="bin">${ic("trash", 15, 16)}<i class="knob"></i></span>
            <div class="sel pdf">${t("Página atual em PDF paisagem", 176)}</div><span class="sv">${ic("save", 12)}</span>
            <b>${t("De 1 para 50 de 53", 106)}</b><span class="g">${ic("right", 6, 11)}</span><span class="g">${ic("last", 8, 11)}</span>
          </div>
          <div class="mass">${ic("massArrow", 28, 17)}<span class="btn y">${t("Ações", 36)}</span></div>
          <div class="table">
            <div class="tr h">${heads.map((h, i) => i === 0 ? html`<div><i class="box"></i></div>` : html`<div><span>${i === 6 ? html`<i class="sort">▼</i>` : nothing}${lines(h)}</span></div>`)}</div>
            ${tickets.map(k => html`<div class="tr ${k.h}">
              <div class="td"><i class="box"></i></div>
              <div class="td">${t(k.id, 32)}</div><div class="td ttl">${lines(k.title)}</div><div class="td">${k.kind}</div><div class="td">${k.cat}</div>
              <div class="td">${lines(k.open)}</div><div class="td">${lines(k.upd)}</div><div class="td">${lines(k.who)}</div><div class="td">${k.group}</div><div></div>
              <div class="td st"><i class="dot"></i><span>Novo</span></div><div class="td pri">Baixa</div>
              <div class="td">${k.tag ? html`<div class="tag">Classifi<br>cado</div>` : nothing}</div>
              <div class="td">${k.wait ? html`<div class="wait">Esperando<br>por uma<br>validação</div>` : nothing}</div><div></div><div></div>
            </div>`)}
          </div>
        </div>
        <div class="scroll"><span class="flip">${ic("chevD", 8, 7)}</span><i></i>${ic("chevD", 8, 7)}</div>
      </div>`;
  }
}

/* ---------- Chrome with the shop dashboard ---------- */
const chromeTabs: [string, string, number][] = [
  ["yt", "(1495) MC Paulin Da Capital", 147], ["sigacom", "MP - SIGACOM - Qual a rela", 148], ["linkedin", "Wellington Amorim | Linked", 147],
  ["github", "CaioSilveiraTelles/Silveira-M", 147], ["heart", "Como enviar para o GitHub", 146], ["webglobe", "Mudar branch Master para M", 149], ["github", "Erro de permissão na hora d", 147],
];
const menu: [string, string, number, number, number][] = [
  ["home", "Dashboard", 61, 15, 27], ["users", "Clientes", 44, 15, 28.500], ["bag", "Produtos", 51, 11, 24], ["wrench", "Serviços", 46, 12, 25], ["worker", "Ordens de Serviço", 102, 15, 28.500],
  ["register", "Vendas", 41, 12, 25], ["book", "Termos de Garantias", 116, 11, 24], ["drive", "Arquivos", 49, 14, 26.500], ["hand", "Financeiro", 58, 14, 26.500], ["report", "Relatórios", 56, 12, 25], ["cog", "Configurações", 80, 12, 25], ["exit", "Sair", 22, 12, 25],
];
const tiles: [string, string, number, string, string, number, number][] = [
  ["users", "Clientes", 52, "F1", "teal", 46, 40], ["bag", "Produtos", 60, "F2", "green", 33, 45], ["wrench", "Serviços", 54, "F3", "red", 37, 45],
  ["worker", "OS", 19, "F4", "gray", 46, 45], ["register", "Vendas", 47, "F6", "blue", 37, 45], ["book", "Termo Garantia", 102, "F7", "blue", 33, 45],
];
const days = [29, 30, ...Array.from({ length: 31 }, (_, i) => i + 1), ...Array.from({ length: 9 }, (_, i) => i + 1)];

@customElement("shop-window")
class ShopWindow extends LitElement {
  static styles = [base, css`
    :host { display: flex; flex-direction: column; height: 1040px; overflow: hidden; font: 12px "Open Sans", sans-serif; color: #666; background: #eee; }
    .tabs { height: 34px; flex: none; background: #dee1e6; display: grid; grid-template-columns: 220px repeat(6, 211px) 212px 1fr 138px; color: #45484c; }
    .tab { display: grid; grid-template-columns: 24px 1fr 14px; align-items: center; padding-right: 8px; padding-left: 11px; position: relative; }
    .tab:first-child { padding-left: 20px; }
    .tab:nth-child(-n + 6)::after { content: ""; position: absolute; right: 0; top: 7px; width: 1px; height: 20px; background: #808388; }
    .tab.on { background: #fff; border-radius: 8px 8px 0 0; padding-left: 12px; padding-right: 9px; margin-left: -1px; width: 212px; }
    .x { color: #45484c; }
    .add { display: flex; align-items: center; padding-left: 14px; color: #333; }
    .win { display: grid; grid-template-columns: 46px 46px 46px; align-items: center; justify-items: center; color: #000; padding-bottom: 5px; }
    .nav { height: 37px; flex: none; background: #fff; border-bottom: 1px solid #d5d8dc; display: grid; grid-template-columns: 32px 32px 30px 1576px 1fr; align-items: center; padding-left: 14px; color: #5f6368; }
    .omni { height: 28px; border-radius: 14px; background: #f1f3f4; display: flex; align-items: center; padding: 0 10px; font-size: 14px; }
    .omni .host { color: #202124; margin-left: 9px; }
    .omni .ns { margin-left: 9px; border-right: 1px solid #9a9da1; padding-right: 8px; height: 20px; line-height: 19px; }
    .omni > svg:last-child { color: #1a73e8; margin-left: auto; }
    .ext { display: grid; grid-template-columns: repeat(7, 32px); justify-items: center; align-items: center; padding-left: 6px; }
    .ext > :first-child { color: #202124; }
    .pale { color: #b9bbbe; }
    .body { display: grid; grid-template-columns: 220px 1683px 17px; flex: 1; min-height: 0; }
    .side { background: #2e363f; color: #939da8; }
    .brand { height: 77px; background: #1f262d; padding: 26px 0 0 20px; }
    .item { height: 42px; border-top: 1px solid #37414b; border-bottom: 1px solid #1f262d; display: flex; align-items: center; padding: 0 20px 1px 15px; }
    .item svg { color: #5f6973; }
    .item.on { background: #27a9e3; color: #fff; border-color: #27a9e3; padding-right: 0; }
    .item.on svg { color: #86cdef; }
    .item.on::after { content: ""; margin-left: auto; border: 9px solid transparent; border-width: 9px 7px 9px 0; border-right-color: #eee; }
    .item .drop { margin-left: auto; width: 20px; height: 19px; border-radius: 3px; background: #ff6666; display: grid; place-items: center; }
    .item .drop svg { color: #ffc4c4; }
    .lab { display: flex; margin-top: -1px; }
    .top { height: 39px; background: #1f262d; color: #939da8; display: grid; grid-template-columns: 14px 99px 13px 92px 1290px 120px 34px; padding-left: 11px; align-items: center; }
    .top > svg { color: #6a737c; }
    .in { height: 29px; background: #47515b; color: #949ca3; border-radius: 3px 0 0 3px; padding-left: 10px; font: 14px/28px "Liberation Sans", sans-serif; }
    .go { height: 29px; background: #28b779; color: #cfeee0; display: grid; place-items: center; }
    .crumb { height: 37px; background: #fff; border-bottom: 1px solid #e3ebed; display: flex; align-items: center; gap: 8px; padding-left: 10px; font-size: 11px; }
    .crumb svg { color: #a3a3a3; }
    .tiles { display: grid; grid-template-columns: repeat(6, 224.300px); column-gap: 10.200px; padding: 45px 0 0 40px; height: 145px; }
    .tile { height: 74px; color: #fff; font-size: 14px; display: flex; flex-direction: column; align-items: center; padding-top: 9px; }
    .tile > svg { height: 37px; }
    .tile.u { padding-top: 11px; } .tile.u > svg { height: 33px; width: 46px; margin-bottom: 2px; }
    .cap { display: flex; gap: 4px; height: 18px; align-items: center; }
    .cap b { width: 31px; height: 18px; line-height: 18px; font-size: 12px; border-radius: 9px; background: #999; text-align: center; }
    .teal { background: #1f6275; } .green { background: #a5d24a; } .red { background: #ef5f5b; } .gray { background: #5a5a5a; } .blue { background: #79b5d4; }
    .w { width: 1643px; margin-left: 20px; border: 1px solid #cdcdcd; background: #f9f9f9; }
    .wt { height: 37px; background: #efefef; border-bottom: 1px solid #cdcdcd; display: flex; align-items: center; font-weight: bold; }
    .wt span { width: 33px; height: 36px; border-right: 1px solid #d8d8d8; display: grid; place-items: center; margin-right: 12px; }
    .agenda { height: 552px; padding: 15px 15px 0; }
    .cal { border: 1px solid #ddd; border-bottom: 3px solid #ddd; height: 502px; width: 1611px; }
    .ch { height: 57px; display: flex; align-items: flex-start; font-size: 22px; font-weight: bold; padding-left: 1px; }
    .ch .ttl { margin-top: 3px; }
    .hoje { margin: 5px 9px 0 auto; width: 44px; height: 30px; border-radius: 3px; background: #737f8a; color: #fff; font: 13px/29px "Noto Sans", sans-serif; text-align: center; }
    .arr { margin-top: 5px; width: 70px; height: 30px; border-radius: 3px; background: #2c3e50; color: #fff; display: grid; grid-template-columns: 1fr 1fr; place-items: center; }
    .grid { display: grid; grid-template-columns: repeat(7, 1fr); border: 1px solid #ddd; border-width: 1px 0 0 1px; }
    .grid div { height: 58px; border: 1px solid #ddd; border-width: 0 1px 1px 0; text-align: right; padding: 5px 4px; line-height: 17px; }
    .grid .dn { height: 26px; font-weight: bold; text-align: center; padding: 3px; }
    .grid .we { background: #efefef; } .grid .today { background: #faf5da; }
    .grid .out { color: #d3d3d3; } .grid .out.we { color: #ccc; }
    .status { height: 30px; margin-left: 1px; background: #fff; border: 1px solid #ccc; border-radius: 3px; display: flex; align-items: center; justify-content: space-between; padding: 0 4px 0 10px; font: 14px "Liberation Sans", sans-serif; color: #555; }
    .go2 { height: 27px; margin: 10px 0 0 1px; background: #efefef; border: 1px solid #767676; border-radius: 2px; color: #000; font: 14px "Liberation Sans", sans-serif; display: grid; place-items: center; }
    .two { margin-top: 31px; }
    .stock { margin: 15px; width: 1611px; height: 66px; border: 1px solid #ddd; border-radius: 3px; }
    .sh { display: grid; grid-template-columns: 250px 225px 357px 221px 372px 1fr; height: 28px; background: #efefef; font-size: 10px; font-weight: bold; text-align: center; line-height: 31px; }
    .sh div { border-left: 1px solid #ddd; height: 28px; }
    .sh div:first-child { border-left: 0; }
    .sh div:nth-child(-n + 3) { border-bottom: 1px solid #ddd; }
    .none { padding: 10px 9px; line-height: 18px; }
    .scroll { background: #f1f1f1; display: flex; flex-direction: column; align-items: center; padding: 7px 0; color: #a3a3a3; }
    .scroll i { width: 13px; height: 291px; background: #c1c1c1; margin: 6px 0 auto; }
    .up { border: 4px solid transparent; border-width: 0 4px 4px; border-bottom-color: #a3a3a3; }
    .dn2 { border: 4px solid transparent; border-width: 4px 4px 0; border-top-color: #505050; }
  `];
  render() {
    return html`
      <div class="tabs">
        ${chromeTabs.map(([i, s, w]) => html`<div class="tab">${ic(i, i === "yt" || i === "linkedin" || i === "webglobe" ? 15 : 16)}<span class="fade">${t(s, w)}</span><span class="x">${ic("close", 13)}</span></div>`)}
        <div class="tab on"><svg width="16" height="17" viewBox="0 0 16 17"><rect x="3" y="1" width="10" height="13" fill="#d9cbe8"/><path d="M10 4C6 2 4.500 5 7 7s2 5-2.500 3.500M11.500 3v9" stroke="#111" stroke-width="1.800" fill="none"/><path d="M0 15.500h16" stroke="#777" stroke-width="1.500" stroke-dasharray="1.500 .6"/></svg>${t("Silveira Center Stoc", 101)}<span class="x">${ic("close", 13)}</span></div>
        <div class="add">${ic("plusThin", 13)}</div>
        <div class="win">${ic("min", 16)}${ic("restore", 16)}${ic("closeThin", 13)}</div>
      </div>
      <div class="nav">
        ${ic("back", 15)}<span class="pale">${ic("fwd", 15)}</span>${ic("reload", 16)}
        <div class="omni">${ic("warn", 16, 14)}<span class="ns">${t("Não seguro", 72)}</span><span class="host">${t("silveiradesenvolvedortestes.epizy.com", 233)}</span>${ic("star", 16, 15)}</div>
        <div class="ext">${ic("pip", 16)}${ic("mail", 16)}${ic("pinc", 15)}${ic("puzzle", 16)}${ic("queue", 16)}
          <svg width="22" height="22" viewBox="0 0 22 22"><circle cx="11" cy="11" r="11" fill="#d8d3cb"/><path d="M0 11c1-1 9-3 12 1l2 8c-7 4-13-1-14-9z" fill="#1c2b4d"/><path d="M16 1.500c5 3 7 9 4 14-2-3-5-10-4-14z" fill="#8a5a48"/><path d="M2 8l6-3 3 6-8 2z" fill="#3a3432"/><rect x="13" y="16" width="4" height="4" fill="#1fd655"/></svg>${ic("vdots", 15)}
        </div>
      </div>
      <div class="body">
        <nav class="side">
          <div class="brand"><svg width="180" height="23" viewBox="0 0 180 23"><rect width="180" height="23" fill="#fff"/><path d="M38.500 1v18.500h103V1z" fill="#f4f2f6" stroke="#7d55b8" stroke-width="2"/><text x="46" y="18.500" font-family="Liberation Sans" font-weight="bold" font-size="22" textLength="56" lengthAdjust="spacingAndGlyphs" fill="#111">S</text><text x="106" y="18.500" font-family="Liberation Sans" font-weight="bold" font-size="22" textLength="26" lengthAdjust="spacingAndGlyphs" fill="#555">E</text><text x="3" y="26" font-family="Liberation Sans" font-weight="bold" font-size="8" textLength="174" lengthAdjust="spacingAndGlyphs" fill="#111">SilveiraFastCoding LTDA</text></svg></div>
          ${menu.map(([i, s, w, iw, off], n) => html`<div class="item ${n ? "" : "on"}">${ic(i, iw, i === "users" || i === "hand" ? 12 : 13)}<span class="lab" style="margin-left:${off - iw}px">${t(s, w)}</span>${n > 7 && n < 11 ? html`<span class="drop">${ic("chevD", 11, 7)}</span>` : nothing}</div>`)}
        </nav>
        <main>
          <div class="top">${ic("eye", 12, 9)}${t("Área do Cliente", 78)}${ic("asterisk", 11, 12)}${t("Versão: 4.20.2", 73)}
            <svg width="110" height="27" viewBox="0 0 110 27"><path d="M7 2h76l20 7-2 11-25 6-66 1-9-3z" fill="#8f9014"/><path d="M8 2l3 8H5z" fill="#777d2c"/><path d="M0 18l4-6c30-5 60-3 97 0l6 1-20 7-22 2-30 1-18-1z" fill="#f00"/><path d="M104 12l4 0-3 4z" fill="#939da8"/></svg>
            <span class="in">${t("Pesquisar...", 72)}</span><span class="go">${ic("search", 15, 15)}</span></div>
          <div class="crumb">${ic("home", 12, 12)}${t("Dashboard", 57)}</div>
          <div class="tiles">${tiles.map(([i, s, w, k, c, iw, ih]) => html`<div class="tile ${c} ${i === "users" ? "u" : ""}">${ic(i, iw, ih)}<span class="cap">${t(s, w)}<b>${k}</b></span></div>`)}</div>
          <section class="w">
            <div class="wt"><span>${ic("calendar", 11, 12)}</span>${t("Agenda", 45)}</div>
            <div class="agenda"><div class="cal">
              <div class="ch"><span class="ttl">${t("dezembro de 2020", 189)}</span><span class="hoje">${t("Hoje", 26)}</span><span class="arr">${ic("chevL", 8, 13)}${ic("chevR", 8, 13)}</span></div>
              <div class="grid">
                ${["dom.", "seg.", "ter.", "qua.", "qui.", "sex.", "sáb."].map(d => html`<div class="dn">${d}</div>`)}
                ${days.map((d, i) => html`<div class="${i % 7 === 0 || i % 7 === 6 ? "we" : ""} ${i < 2 || i > 32 ? "out" : ""} ${i === 30 ? "today" : ""}">${d}</div>`)}
              </div>
              <div class="status">${t("Todos os Status", 99)}${ic("chevD", 8, 6)}</div>
              <div class="go2">${t("Pesquisar", 63)}</div>
            </div></div>
          </section>
          <section class="w two">
            <div class="wt"><span>${ic("bag", 11, 12)}</span>${t("Produtos Com Estoque Mínimo", 184)}</div>
            <div class="stock"><div class="sh">${["Cod. Item", "Produto", "Preço de Venda", "Estoque", "Estoque Mínimo", "Ações"].map(s => html`<div>${s}</div>`)}</div><div class="none">${t("Nenhum produto com estoque baixo.", 210)}</div></div>
          </section>
        </main>
        <div class="scroll"><b class="up"></b><i></i><b class="dn2"></b></div>
      </div>`;
  }
}

@customElement("app-root")
class AppRoot extends LitElement {
  static styles = css`
    :host { display: grid; grid-template-columns: 1366px 1920px; width: 3286px; height: 1080px; background: #000; overflow: hidden; }
    .left { padding-top: 304px; height: 1080px; box-sizing: border-box; overflow: hidden; }
    .right { height: 1080px; overflow: hidden; }
  `;
  render() {
    return html`<div class="left"><glpi-window></glpi-window><task-bar></task-bar></div><div class="right"><shop-window></shop-window><task-bar main></task-bar></div>`;
  }
}
